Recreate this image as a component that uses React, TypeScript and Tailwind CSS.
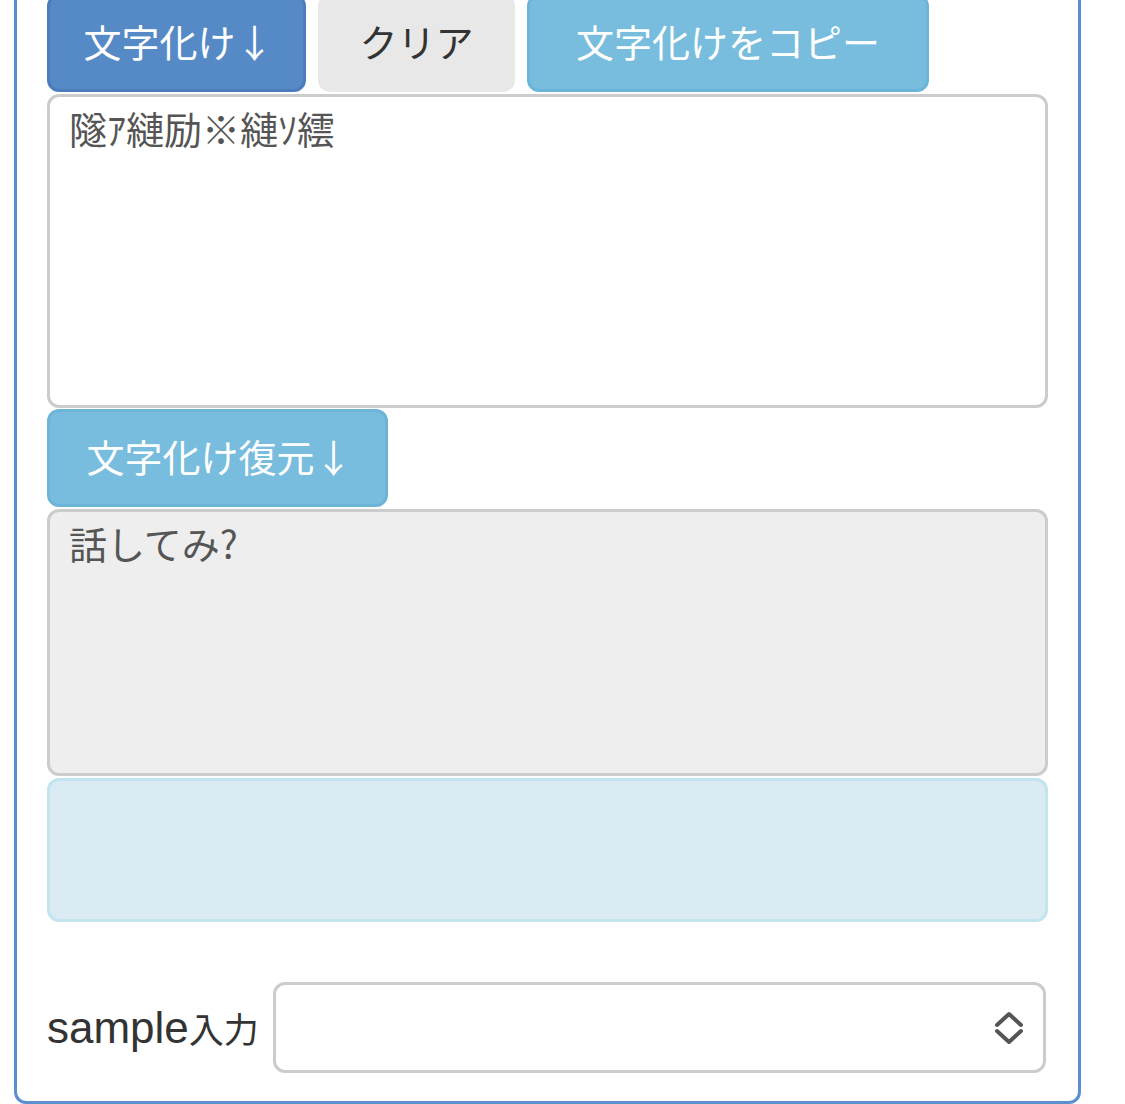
const jp = "font-['Noto_Sans_CJK_JP',sans-serif]"

function Chevrons() {
  return (
    <svg width="30" height="34" viewBox="0 0 30 34" fill="none" stroke="#555" strokeWidth="4" strokeLinecap="round" strokeLinejoin="round">
      <path d="M3 14 L15 3 L27 14" />
      <path d="M3 20 L15 31 L27 20" />
    </svg>
  )
}

export default function App() {
  return (
    <div className="min-h-screen w-[1125px] overflow-hidden bg-white">
      {/* panel, top edge runs off the screen */}
      <div className="ml-[14px] mt-[-40px] w-[1067px] rounded-b-[12px] border-[3px] border-[#5b8fd0] px-[30px] pt-[31px] pb-[28px]">

        {/* ── buttons ── */}
        <div className={`flex gap-[12px] text-[38px] leading-none ${jp}`}>
          <button className="flex h-[98px] w-[259px] items-center justify-center rounded-[12px] border-[3px] border-[#4b7dbc] bg-[#558ac6] pl-[4px] pb-[4px] text-white">
            文字化け↓
          </button>
          <button className="flex h-[98px] w-[197px] items-center justify-center rounded-[12px] border-[3px] border-[#e8e8e8] bg-[#e8e8e8] pb-[4px] text-[#333]">
            クリア
          </button>
          <button className="flex h-[98px] w-[402px] items-center justify-center rounded-[12px] border-[3px] border-[#6cb5d8] bg-[#78bddd] pb-[4px] text-white">
            文字化けをコピー
          </button>
        </div>

        <textarea
          readOnly
          value="隧ｱ縺励※縺ｿ繧"
          className={`mt-[2px] block h-[314px] w-[1001px] resize-none rounded-[12px] border-[3px] border-[#cccccc] bg-white px-[19px] pt-[4px] text-[38px] leading-[1.4] text-[#555] outline-none ${jp}`}
        />

        <button className={`mt-[1px] flex h-[98px] w-[341px] items-center justify-center rounded-[12px] border-[3px] border-[#6cb5d8] bg-[#78bddd] pl-[4px] pb-[4px] text-[38px] leading-none text-white ${jp}`}>
          文字化け復元↓
        </button>

        <textarea
          readOnly
          value="話してみ?"
          className={`mt-[2px] block h-[267px] w-[1001px] resize-none rounded-[12px] border-[3px] border-[#cccccc] bg-[#eeeeee] px-[19px] pt-[4px] text-[38px] leading-[1.4] text-[#555] outline-none ${jp}`}
        />

        {/* info alert, empty */}
        <div className="mt-[2px] h-[144px] w-[1001px] rounded-[12px] border-[3px] border-[#c3e5ef] bg-[#daebf3]" />

        {/* ── sample select ── */}
        <div className="mt-[60px] flex items-center gap-[15px]">
          <label className="w-[211px] shrink-0 whitespace-nowrap text-[#333]">
            <span className="font-['Liberation_Sans',sans-serif] text-[44px]">sample</span>
            <span className={`text-[35px] ${jp}`}>入力</span>
          </label>
          <div className="mr-[2px] flex h-[91px] flex-1 items-center justify-end rounded-[12px] border-[3px] border-[#cccccc] bg-white pr-[19px]">
            <Chevrons />
          </div>
        </div>
      </div>
    </div>
  )
}
